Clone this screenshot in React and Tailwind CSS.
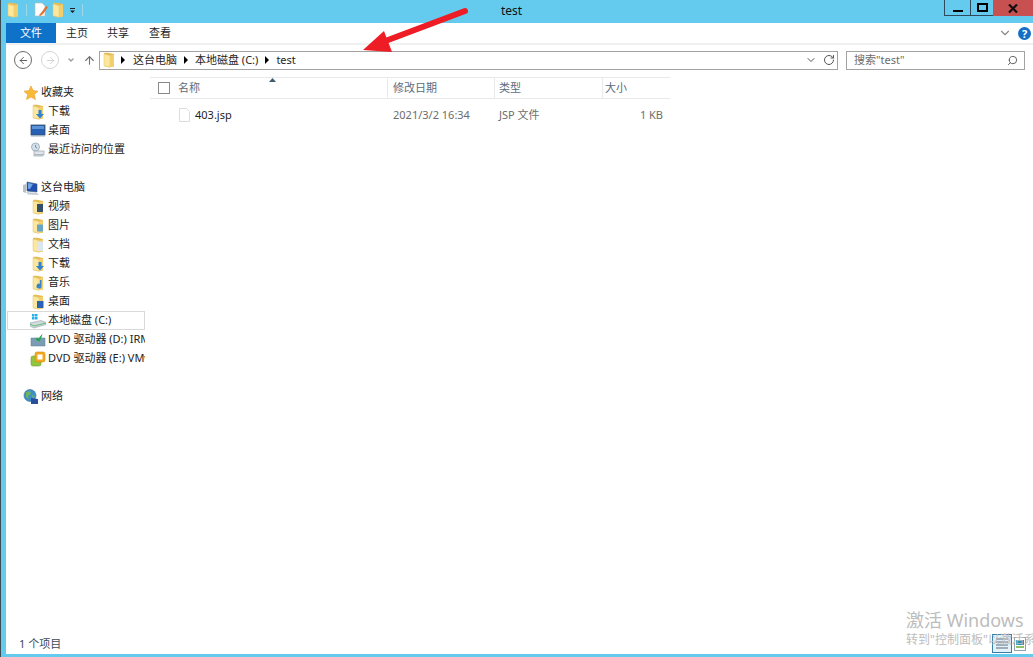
import { ChevronDown, RotateCw, Search, ArrowUp, ArrowLeft, ArrowRight } from 'lucide-react';

const FONT = "font-['Noto_Sans','Noto_Sans_CJK_SC',sans-serif]";

// tall manila folder, with an optional overlay for the library folders
function Folder({ accent }) {
  return (
    <svg width="16" height="16" viewBox="0 0 16 16">
      <path d="M3 1.500c0-.5.4-.8 1-.8h3l6 1.300v12.500l-5 .8-5-1.300z" fill="#e6bd55" />
      <path d="M3 2l6 1.500v11.800l-6-1.600z" fill="#fbe79d" stroke="#e3c26c" strokeWidth="0.5" />
      <path d="M9 3.500l4-1v12l-4 .8z" fill="#f3cf6b" />
      {accent && <path d={accent.d} fill={accent.fill} />}
    </svg>
  );
}

const ACCENTS = {
  video: { d: 'M7 5h6v8H7z', fill: '#35506b' },
  picture: { d: 'M7 6.500h6v7H7z', fill: '#6aa6c4' },
  doc: { d: 'M7 4.500h6v9.500H7z', fill: '#dde5ee' },
  down: { d: 'M8.500 6h3v4H14l-4 4.500L6 10h2.500z', fill: '#2f83cf' },
  music: { d: 'M10 5h1.500v6a2.500 2.500 0 1 1-1.500-2.200z', fill: '#3a85c9' },
  desk: { d: 'M7 7h6.500v7H7z', fill: '#2a62b4' },
};

function Star() {
  return (
    <svg width="16" height="16" viewBox="0 0 16 16">
      <path d="M8 1l2.100 4.600 4.900.6-3.600 3.400 1 5L8 11.900 3.600 14.600l1-5L1 6.200l4.900-.6z" fill="#f7bb3a" stroke="#ee9b2d" strokeWidth="0.6" />
    </svg>
  );
}

function Desktop() {
  return (
    <svg width="16" height="16" viewBox="0 0 16 16">
      <rect x="1" y="2" width="14" height="10" fill="#2560b3" stroke="#3a4f6b" strokeWidth="0.8" />
      <rect x="2" y="3" width="12" height="3" fill="#5b93d8" />
      <rect x="1" y="12" width="14" height="1.500" fill="#9fb0c2" />
    </svg>
  );
}

function Recent() {
  return (
    <svg width="16" height="16" viewBox="0 0 16 16">
      <circle cx="5.500" cy="5" r="4" fill="#d5e1ea" stroke="#8ea4b5" strokeWidth="0.8" />
      <path d="M5.500 3v2.200l1.600 1" fill="none" stroke="#5d7a8e" strokeWidth="0.8" />
      <rect x="4" y="9" width="10" height="3.500" fill="#dfe4e8" stroke="#97a3ad" strokeWidth="0.7" />
      <path d="M3 13h11l-1 1.500H4z" fill="#b9c3ca" />
    </svg>
  );
}

function Computer() {
  return (
    <svg width="16" height="16" viewBox="0 0 16 16">
      <path d="M0 5l3-1v9l-3-1z" fill="#b8bfc6" />
      <path d="M4 2l10 2v8L4 11z" fill="#1f4fb0" stroke="#40566f" strokeWidth="0.6" />
      <path d="M5 3l5 1-3 5-2-.3z" fill="#6fa4e8" />
      <path d="M3 12l11 1 2 2-11-.6z" fill="#c5ccd3" />
    </svg>
  );
}

function LocalDisk() {
  return (
    <svg width="16" height="16" viewBox="0 0 16 16">
      <rect x="2" y="1" width="2.500" height="2.500" fill="#1fb1ea" />
      <rect x="5" y="1" width="2.500" height="2.500" fill="#1fb1ea" />
      <rect x="2" y="4" width="2.500" height="2.500" fill="#1fb1ea" />
      <rect x="5" y="4" width="2.500" height="2.500" fill="#1fb1ea" />
      <path d="M0 10l11-2.500 5 2v2L4 15l-4-2z" fill="#d3d9de" stroke="#87929b" strokeWidth="0.5" />
      <path d="M0 11l4 2 12-3" fill="none" stroke="#4fbf6a" strokeWidth="0.9" />
    </svg>
  );
}

function DvdD() {
  return (
    <svg width="16" height="16" viewBox="0 0 16 16">
      <path d="M1 6h14v8H1z" fill="#7c9cb4" stroke="#5f7f98" strokeWidth="0.5" />
      <path d="M6 8c0-1 .5-2 1-2.500l1.500 1.500C9.500 5 11 3 12.500 2c-.5 2-1.500 5-3 7.500z" fill="#1faa4b" />
    </svg>
  );
}

function DvdE() {
  return (
    <svg width="16" height="16" viewBox="0 0 16 16">
      <rect x="1" y="5" width="10" height="10" rx="2" fill="#8fc63f" stroke="#6fa02a" strokeWidth="0.6" />
      <rect x="5" y="1" width="10" height="10" rx="2" fill="#f3a91f" stroke="#d48b12" strokeWidth="0.6" />
      <rect x="7.500" y="3.500" width="5" height="5" fill="#fff" />
    </svg>
  );
}

function Globe() {
  return (
    <svg width="16" height="16" viewBox="0 0 16 16">
      <circle cx="7" cy="6.500" r="6" fill="#3d8fc9" stroke="#3e6d8f" strokeWidth="0.6" />
      <path d="M3 3l4-1 1 3-3 2 1 3-3-2zM9 6l3 1-2 3z" fill="#6fb35a" />
      <path d="M8 9l7 1v5H8z" fill="#274f9e" />
    </svg>
  );
}

function TreeRow({ icon, label, indent, selected }) {
  return (
    <div
      className={`flex h-[19px] items-center whitespace-nowrap overflow-hidden ${indent ? (selected ? 'pl-[22px]' : 'pl-[23px]') : 'pl-[16px]'} ${
        selected ? 'border border-[#d9d9d9]' : ''
      }`}
    >
      <span className="mr-[1px] flex w-[16px] shrink-0 justify-center">{icon}</span>
      <span className="ml-[1px]">{label}</span>
    </div>
  );
}

export default function App() {
  return (
    <div className={`${FONT} relative flex h-[657px] w-[1033px] flex-col overflow-hidden border-l border-l-[#3c4a52] bg-[#65cbee] pb-[3px] pl-[5px] text-[11px] text-[#1e1e1e]`}>
      {/* Title bar */}
      <div className="-ml-[5px] flex h-[23px] shrink-0 items-start">
        <div className="flex flex-1 items-center pl-[4px] pt-[2px]">
          <Folder />
          <div className="ml-[5px] mr-[6px] h-[12px] w-px bg-[#9fd8ea]" />
          <svg width="16" height="16" viewBox="0 0 16 16">
            <path d="M2 1h7l3 3v10H2z" fill="#fff" stroke="#b9b9b9" strokeWidth="0.6" />
            <path d="M6 13l2-2 5-7 2 1-5 7-3 2z" fill="#e2702c" />
          </svg>
          <span className="ml-[1px]"><Folder /></span>
          <svg width="9" height="9" viewBox="0 0 9 9" className="ml-[2px]">
            <path d="M2 2h5v1H2zM2 4.500h5L4.500 7z" fill="#1e1e1e" />
          </svg>
          <div className="ml-[5px] h-[12px] w-px bg-[#9fd8ea]" />
        </div>
        <div className="mr-[15px] pt-[2px] text-[12px] leading-[17px] text-[#111]">test</div>
        <div className="flex flex-1 justify-end">
          <div className="flex h-[16px] w-[89px]">
            <div className="flex w-[26px] items-end justify-center border-b border-l border-[#2d4b5c] pb-[3px]">
              <div className="h-[2px] w-[10px] bg-black" />
            </div>
            <div className="flex w-[23px] items-center justify-center border-b border-l border-[#2d4b5c]">
              <div className="h-[9px] w-[11px] border-2 border-black" />
            </div>
            <div className="flex w-[40px] items-center justify-center bg-[#c75050]">
              <svg width="10" height="9" viewBox="0 0 10 9">
                <path d="M1 0.500l8 8M9 0.500l-8 8" stroke="#111" strokeWidth="2.200" />
              </svg>
            </div>
          </div>
        </div>
      </div>

      <div className="flex min-h-0 flex-1 flex-col bg-white">
        {/* Ribbon tabs */}
        <div className="flex h-[20px] shrink-0 items-center">
          <div className="flex h-full w-[50px] items-center justify-center bg-[#0f72c9] text-white">文件</div>
          <span className="ml-[10px] w-[41px]">主页</span>
          <span className="w-[42px]">共享</span>
          <span>查看</span>
          <div className="ml-auto flex items-center gap-[6px] pr-[2px]">
            <ChevronDown size={14} className="text-[#8a8a8a]" />
            <span className="flex h-[13px] w-[13px] items-center justify-center rounded-full bg-[#1270c6] text-[11px] font-bold leading-none text-white">?</span>
          </div>
        </div>
        <div className="h-[2px] shrink-0 bg-[#f0f0f0]" />

        {/* Navigation row */}
        <div className="flex h-[30px] shrink-0 items-center">
          <div className="ml-[8px] flex h-[18px] w-[18px] items-center justify-center rounded-full border border-[#6b6b6b]">
            <ArrowLeft size={11} className="text-[#555]" strokeWidth={2} />
          </div>
          <div className="ml-[9px] flex h-[18px] w-[18px] items-center justify-center rounded-full border border-[#d5d5d5]">
            <ArrowRight size={11} className="text-[#cfcfcf]" strokeWidth={2} />
          </div>
          <ChevronDown size={8} strokeWidth={4} className="ml-[8px] text-[#9a9a9a]" />
          <ArrowUp size={13} className="ml-[8px] text-[#6e6e6e]" />
          <div className="ml-[3px] flex h-[19px] w-[739px] items-center border border-[#a3a3a3] pl-[1px]">
            <Folder />
            <span className="ml-[4px] mr-[8px] h-0 w-0 border-y-[4px] border-l-[4px] border-y-transparent border-l-black" />
            <span>这台电脑</span>
            <span className="mx-[7px] h-0 w-0 border-y-[4px] border-l-[4px] border-y-transparent border-l-black" />
            <span>本地磁盘 (C:)</span>
            <span className="mx-[7px] h-0 w-0 border-y-[4px] border-l-[4px] border-y-transparent border-l-black" />
            <span>test</span>
            <ChevronDown size={12} className="ml-auto text-[#555]" />
            <RotateCw size={12} className="ml-[6px] mr-[2px] text-[#555]" />
          </div>
          <div className="ml-[8px] flex h-[19px] w-[179px] items-center border border-[#a3a3a3] pl-[7px] pr-[6px] text-[#6d6d6d]">
            <span>搜索"test"</span>
            <Search size={11} className="ml-auto -scale-x-100 text-[#555]" />
          </div>
        </div>

        {/* Body */}
        <div className="flex min-h-0 flex-1">
          {/* Tree */}
          <div className="w-[139px] shrink-0 pl-[1px] pt-[8px] text-[#222]">
            <TreeRow icon={<Star />} label="收藏夹" />
            <TreeRow indent icon={<Folder accent={ACCENTS.down} />} label="下载" />
            <TreeRow indent icon={<Desktop />} label="桌面" />
            <TreeRow indent icon={<Recent />} label="最近访问的位置" />
            <div className="h-[19px]" />
            <TreeRow icon={<Computer />} label="这台电脑" />
            <TreeRow indent icon={<Folder accent={ACCENTS.video} />} label="视频" />
            <TreeRow indent icon={<Folder accent={ACCENTS.picture} />} label="图片" />
            <TreeRow indent icon={<Folder accent={ACCENTS.doc} />} label="文档" />
            <TreeRow indent icon={<Folder accent={ACCENTS.down} />} label="下载" />
            <TreeRow indent icon={<Folder accent={ACCENTS.music} />} label="音乐" />
            <TreeRow indent icon={<Folder accent={ACCENTS.desk} />} label="桌面" />
            <TreeRow indent selected icon={<LocalDisk />} label="本地磁盘 (C:)" />
            <TreeRow indent icon={<DvdD />} label="DVD 驱动器 (D:) IRM" />
            <TreeRow indent icon={<DvdE />} label="DVD 驱动器 (E:) VMware Tools" />
            <div className="h-[19px]" />
            <TreeRow icon={<Globe />} label="网络" />
          </div>

          {/* File list */}
          <div className="ml-[5px] min-w-0 flex-1 pt-[2px]">
            <div className="relative flex h-[22px] w-[520px] border-y border-[#e9e9e9] text-[#5b6b7c]">
              <svg width="7" height="4" viewBox="0 0 7 4" className="absolute left-[119px] top-0">
                <path d="M3.500 0L7 4H0z" fill="#3f5a6b" />
              </svg>
              <div className="flex w-[237px] items-center pl-[8px]">
                <span className="h-[12px] w-[12px] border border-[#8a8a8a]" />
                <span className="ml-[8px]">名称</span>
              </div>
              <div className="flex w-[107px] items-center border-l border-[#e9e9e9] pl-[5px]">修改日期</div>
              <div className="flex w-[108px] items-center border-l border-[#e9e9e9] pl-[4px]">类型</div>
              <div className="flex flex-1 items-center border-l border-[#e9e9e9] pl-[2px]">大小</div>
            </div>
            <div className="flex h-[32px] w-[520px] items-center">
              <div className="flex w-[237px] items-center pl-[29px] text-[#1e1e1e]">
                <svg width="11" height="14" viewBox="0 0 11 14">
                  <path d="M0.500 0.500h7l3 3v10h-10z" fill="#fff" stroke="#dcdcdc" />
                </svg>
                <span className="ml-[5px]">403.jsp</span>
              </div>
              <div className="w-[107px] pl-[6px] text-[#6d6d6d]">2021/3/2 16:34</div>
              <div className="w-[108px] pl-[5px] text-[#6d6d6d]">JSP 文件</div>
              <div className="flex-1 pr-[7px] text-right text-[#6d6d6d]">1 KB</div>
            </div>
          </div>
        </div>

        {/* Status bar */}
        <div className="flex h-[20px] shrink-0 items-center pl-[13px] text-[#3c4a5a]">1 个项目</div>
      </div>

      {/* Screenshot annotation */}
      <svg width="120" height="50" viewBox="0 0 120 50" className="absolute left-[355px] top-[6px]">
        <path d="M109 5L32 34" stroke="#ee1c25" strokeWidth="6" strokeLinecap="round" />
        <path d="M7 44L28 25l8 21z" fill="#ee1c25" />
      </svg>

      {/* View toggles */}
      <div className="absolute left-[991px] top-[634px] flex items-center gap-[2px]">
        <div className="flex h-[19px] w-[20px] items-center justify-center border border-[#3a7ea8] bg-[#e3f1f8]">
          <svg width="14" height="12" viewBox="0 0 14 12">
            <path d="M1 1h12M1 4h12M1 7h12M1 10h12" stroke="#5a6b7a" strokeWidth="1.200" />
          </svg>
        </div>
        <svg width="12" height="14" viewBox="0 0 12 14">
          <rect x="0.500" y="0.500" width="11" height="13" fill="#fff" stroke="#8fa3b3" />
          <rect x="2" y="3" width="8" height="5" fill="#2f8fb5" />
          <rect x="2" y="9" width="8" height="2" fill="#8fc06a" />
        </svg>
      </div>

      {/* Activation watermark */}
      <div className="pointer-events-none absolute left-[905px] top-[608px] w-[128px] overflow-hidden whitespace-nowrap text-[#bdbdbd]">
        <div className="text-[18px] leading-[24px]">激活 Windows</div>
        <div className="text-[12px] leading-[16px]">转到"控制面板"以激活系统</div>
      </div>
    </div>
  );
}
